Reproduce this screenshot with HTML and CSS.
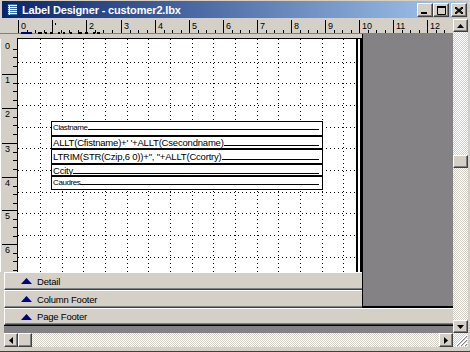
FILE: index.html
```html
<!DOCTYPE html>
<html lang="en">
<head>
    <meta charset="UTF-8">
    <meta name="viewport" content="width=device-width, initial-scale=1.0">
    <title>Label Designer - customer2.lbx</title>
    <link rel="stylesheet" href="styles.css">
</head>
<body>
    <div class="window">
        <div class="titlebar">
            <svg class="app-icon" width="11" height="12" viewBox="0 0 11 12">
                <rect x="0" y="0" width="11" height="12" fill="#fff"/>
                <path d="M0 0.5h11M0 2.5h11M0 4.5h11M0 6.5h11M0 8.5h11M0 10.5h11" stroke="#3a6ea5"/>
                <path d="M0.5 0v12M10.5 0v12M0 11.5h11" stroke="#10307a"/>
                <path d="M2.5 1v10" stroke="#fff"/>
            </svg>
            <span class="title">Label Designer - customer2.lbx</span>
            <div class="tb-buttons">
                <button class="tb-btn"><svg width="8" height="7"><rect x="0" y="5" width="6" height="2" fill="#000"/></svg></button>
                <button class="tb-btn"><svg width="9" height="9"><path d="M0.5 1.5h8v7h-8z" fill="none" stroke="#000"/><rect x="0" y="0" width="9" height="2" fill="#000"/></svg></button>
                <button class="tb-btn close"><svg width="8" height="7"><path d="M0 0l8 7M1 0l7 6M0 1l7 6M8 0l-8 7M7 0l-7 6M8 1l-7 6" stroke="#000" stroke-width="1"/></svg></button>
            </div>
        </div>

        <div class="client">
            <div class="main">
                <svg class="hruler" width="453" height="15" viewBox="0 0 453 15">
                    <rect x="0" y="14" width="453" height="1" fill="#808080"/>
                    <path d="M18.5 1v13M52.5 1v13M86.5 1v13M121.5 1v13M155.5 1v13M189.5 1v13M223.5 1v13M257.5 1v13M291.5 1v13M325.5 1v13M359.5 1v13M393.5 1v13M427.5 1v13" stroke="#000"/>
                    <path d="M27.5 11v3M35.5 11v3M44.5 11v3M61.5 11v3M69.5 11v3M78.5 11v3M95.5 11v3M103.5 11v3M112.5 11v3M130.5 11v3M138.5 11v3M147.5 11v3M164.5 11v3M172.5 11v3M181.5 11v3M198.5 11v3M206.5 11v3M215.5 11v3M232.5 11v3M240.5 11v3M249.5 11v3M266.5 11v3M274.5 11v3M283.5 11v3M300.5 11v3M308.5 11v3M317.5 11v3M334.5 11v3M342.5 11v3M351.5 11v3M368.5 11v3M376.5 11v3M385.5 11v3M402.5 11v3M410.5 11v3M419.5 11v3M436.5 11v3M444.5 11v3" stroke="#000"/>
                    <g class="rnum">
                        <text x="21" y="10">0</text>
                        <rect x="55" y="4" width="1" height="2"/>
                        <text x="89" y="10">2</text>
                        <text x="124" y="10">3</text>
                        <text x="158" y="10">4</text>
                        <text x="192" y="10">5</text>
                        <text x="226" y="10">6</text>
                        <text x="260" y="10">7</text>
                        <text x="294" y="10">8</text>
                        <text x="328" y="10">9</text>
                        <text x="362" y="10">10</text>
                        <text x="396" y="10">11</text>
                        <text x="430" y="10">12</text>
                    </g>
                    <rect x="21" y="13" width="11" height="2" fill="#000080"/>
                    <path d="M38 14h4M45 14h2M50 14h3M58 14h2M63 14h2M70 14h2M78 14h4M85 14h3M93 14h2M97 14h3" stroke="#000" stroke-width="2"/>
                </svg>

                <div class="body-row">
                    <div class="design">
                        <div class="band-strip"></div>
                        <div class="work">
                            <svg class="vruler" width="18" height="233" viewBox="0 0 18 233">
                                <rect x="0" y="0" width="1" height="233" fill="#fff"/>
                                <rect x="17" y="0" width="1" height="233" fill="#000"/>
                                <path d="M2 35.5h15M2 69.5h15M2 104.5h15M2 138.5h15M2 171.5h15M2 205.5h15" stroke="#000"/>
                                <path d="M13 10.5h4M13 18.5h4M13 27.5h4M13 44.5h4M13 52.5h4M13 61.5h4M13 78.5h4M13 86.5h4M13 95.5h4M13 113.5h4M13 121.5h4M13 130.5h4M13 147.5h4M13 155.5h4M13 164.5h4M13 180.5h4M13 188.5h4M13 197.5h4M13 214.5h4M13 222.5h4M13 231.5h4" stroke="#000"/>
                                <g class="rnum">
                                    <text x="5" y="10">0</text>
                                    <text x="5" y="44">1</text>
                                    <text x="5" y="78">2</text>
                                    <text x="5" y="113">3</text>
                                    <text x="5" y="147">4</text>
                                    <text x="5" y="180">5</text>
                                    <text x="5" y="214">6</text>
                                </g>
                            </svg>
                            <div class="page">
                                <svg class="grid" width="338" height="233" viewBox="0 0 338 233">
                                    <g stroke="#000" stroke-dasharray="1 3" shape-rendering="crispEdges">
                                        <path d="M22.5 0v233M44.5 0v233M65.5 0v233M87.5 0v233M109.5 0v233M130.5 0v233M152.5 0v233M174.5 0v233M195.5 0v233M217.5 0v233M239.5 0v233M260.5 0v233M282.5 0v233M304.5 0v233M325.5 0v233"/>
                                        <path d="M0 23.5h338M0 44.5h338M0 66.5h338M0 88.5h338M0 109.5h338M0 131.5h338M0 153.5h338M0 174.5h338M0 196.5h338M0 218.5h338"/>
                                    </g>
                                </svg>
                                <div class="fields">
                                    <div class="field f1"><span class="txt small">Clastname</span><span class="fill"></span></div>
                                    <div class="field f2"><span class="txt">ALLT(Cfistname)+' '+ALLT(Csecondname)</span><span class="fill"></span></div>
                                    <div class="field f3"><span class="txt">LTRIM(STR(Czip,6 0))+", "+ALLT(Ccortry)</span><span class="fill"></span></div>
                                    <div class="field f4"><span class="txt">Ccity</span><span class="fill"></span></div>
                                    <div class="field f5"><span class="txt small">Caudres</span><span class="fill"></span></div>
                                </div>
                            </div>
                        </div>
                        <div class="band">
                            <svg class="tri" width="11" height="6"><polygon points="0,6 5.5,0 11,6" fill="#000080"/></svg>
                            <span>Detail</span>
                        </div>
                        <div class="band">
                            <svg class="tri" width="11" height="6"><polygon points="0,6 5.5,0 11,6" fill="#000080"/></svg>
                            <span>Column Footer</span>
                        </div>
                    </div>
                    <div class="outside"></div>
                </div>

                <div class="band page-footer">
                    <svg class="tri" width="11" height="6"><polygon points="0,6 5.5,0 11,6" fill="#000080"/></svg>
                    <span>Page Footer</span>
                </div>
                <div class="footer-strip"></div>

                <div class="hscroll">
                    <div class="sbtn"><svg width="4" height="7"><polygon points="4,0 0,3.5 4,7" fill="#000"/></svg></div>
                    <div class="sbtn thumb"></div>
                    <div class="track"></div>
                    <div class="sbtn"><svg width="4" height="7"><polygon points="0,0 4,3.5 0,7" fill="#000"/></svg></div>
                </div>
            </div>

            <div class="side">
                <div class="vscroll">
                    <div class="sbtn"><svg width="7" height="4"><polygon points="0,4 3.5,0 7,4" fill="#000"/></svg></div>
                    <div class="sbtn thumb vthumb"></div>
                    <div class="track"></div>
                    <div class="sbtn"><svg width="7" height="4"><polygon points="0,0 3.5,4 7,0" fill="#000"/></svg></div>
                </div>
                <div class="grip">
                    <svg width="15" height="14" viewBox="0 0 15 14">
                        <path d="M14 2L3 13M14 6L7 13M14 10L11 13" stroke="#fff"/>
                        <path d="M14 3L4 13M14 7L8 13M14 11L12 13" stroke="#808080"/>
                    </svg>
                </div>
            </div>
        </div>
    </div>
</body>
</html>
```

FILE: styles.css
```css
* {
    box-sizing: border-box;
}
body {
    margin: 0;
    font-family: "Liberation Sans", Arial, sans-serif;
    background: #d4d0c8;
}
.window {
    width: 470px;
    height: 352px;
    padding-top: 1px;
    background: #d4d0c8;
    border-bottom: 1px solid #404040;
    overflow: hidden;
}
.titlebar {
    height: 17px;
    margin: 0 2px 1px 2px;
    padding-left: 5px;
    display: flex;
    align-items: center;
    background: linear-gradient(to right, #0a246a, #a6caf0);
    color: #fff;
}
.app-icon {
    flex: none;
    margin-right: 4px;
}
.title {
    flex: 1;
    font-size: 11px;
    font-weight: bold;
    letter-spacing: -0.15px;
    white-space: nowrap;
}
.tb-buttons {
    display: flex;
    align-self: flex-start;
    margin-top: 2px;
    margin-right: 1px;
}
.tb-btn {
    width: 16px;
    height: 14px;
    padding: 0;
    display: flex;
    align-items: center;
    justify-content: center;
    background: #d4d0c8;
    border: 1px solid;
    border-color: #fff #404040 #404040 #fff;
    box-shadow: inset -1px -1px #808080;
}
.tb-btn.close {
    margin-left: 2px;
}
.client {
    display: flex;
    height: 328px;
}
.main {
    width: 453px;
    display: flex;
    flex-direction: column;
}
.hruler, .vruler {
    display: block;
    flex: none;
}
.rnum {
    font-family: "Liberation Sans", Arial, sans-serif;
    font-size: 9px;
    fill: #000;
}
.body-row {
    display: flex;
    height: 274px;
}
.design {
    width: 362px;
    display: flex;
    flex-direction: column;
}
.band-strip {
    height: 5px;
    margin-left: 17px;
    border-bottom: 1px solid #000;
}
.work {
    display: flex;
    height: 233px;
}
.page {
    position: relative;
    width: 344px;
    background: #fff;
    border-right: 2px solid #000;
    box-shadow: inset -2px 0 #fff, inset -4px 0 #000;
}
.grid {
    position: absolute;
    left: 0;
    top: 0;
}
.fields {
    position: absolute;
    left: 33px;
    top: 82px;
    width: 272px;
    background: #fff;
    border: 1px solid #000;
}
.field {
    display: flex;
    align-items: baseline;
    padding: 0 3px 0 1px;
    overflow: hidden;
    white-space: nowrap;
}
.field + .field {
    border-top: 2px solid #000;
}
.txt {
    font-size: 9.5px;
    letter-spacing: -0.2px;
    line-height: 10px;
}
.txt.small {
    font-size: 8px;
    letter-spacing: -0.4px;
    line-height: 9px;
}
.fill {
    flex: 1;
    height: 0;
    border-bottom: 1px solid #000;
}
.f1 { height: 13px; padding-top: 1px; }
.f2 { height: 13px; padding-top: 1px; }
.f3 { height: 15px; padding-top: 2px; }
.f4 { height: 12px; padding-top: 1px; }
.f5 { height: 14px; padding-top: 1px; }
.band {
    height: 18px;
    margin-left: 4px;
    padding-left: 16px;
    display: flex;
    align-items: center;
    gap: 5px;
    background: #d4d0c8;
    border-top: 1px solid #fff;
    border-left: 1px solid #fff;
    border-bottom: 1px solid #404040;
    box-shadow: inset 0 -1px #808080;
    font-size: 9.5px;
    letter-spacing: -0.2px;
    color: #000;
    white-space: nowrap;
}
.band.page-footer {
    height: 17px;
}
.tri {
    flex: none;
}
.outside {
    flex: 1;
    background: #858285;
    border-left: 1px solid #000;
    border-bottom: 2px solid #000;
}
.footer-strip {
    height: 8px;
    margin-left: 4px;
    background: #858285;
    border-top: 1px solid #000;
}
.hscroll {
    height: 14px;
    margin-left: 4px;
    display: flex;
}
.track {
    flex: 1;
    background: repeating-conic-gradient(#d4d0c8 0 25%, #fff 0 50%) 0 0 / 2px 2px;
}
.sbtn {
    flex: none;
    width: 14px;
    height: 14px;
    display: flex;
    align-items: center;
    justify-content: center;
    background: #d4d0c8;
    border: 1px solid;
    border-color: #fff #404040 #404040 #fff;
    box-shadow: inset -1px -1px #808080;
}
.side {
    width: 15px;
    display: flex;
    flex-direction: column;
}
.vscroll {
    flex: 1;
    display: flex;
    flex-direction: column;
    background: repeating-conic-gradient(#d4d0c8 0 25%, #fff 0 50%) 0 0 / 2px 2px;
}
.vscroll .sbtn {
    width: 15px;
    height: 13px;
}
.vscroll .vthumb {
    margin-top: 123px;
}
.grip {
    height: 14px;
    background: repeating-conic-gradient(#d4d0c8 0 25%, #fff 0 50%) 0 0 / 2px 2px;
}
.grip svg {
    display: block;
}
```
